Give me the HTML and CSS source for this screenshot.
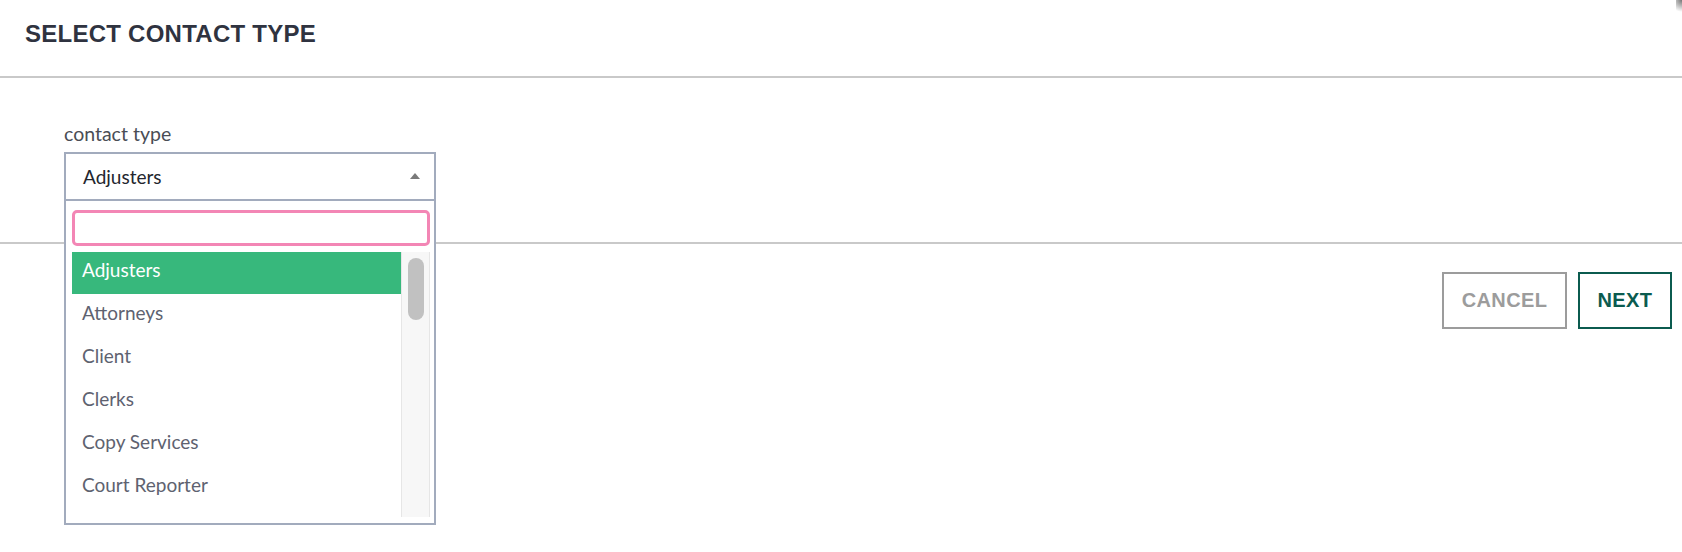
FILE: index.html
```html
<!DOCTYPE html>
<html lang="en">
<head>
  <meta charset="UTF-8">
  <title>Select contact type</title>
  <link rel="stylesheet" href="styles.css">
</head>
<body>
  <div class="modal">
    <div class="modal-header">
      <h2 class="modal-title">SELECT CONTACT TYPE</h2>
    </div>

    <div class="modal-body">
      <label class="field-label">contact type</label>
      <div class="select-wrap">
        <div class="select-box">
          <span class="select-value">Adjusters</span>
          <span class="select-arrow"></span>
        </div>

        <!-- open dropdown -->
        <div class="dropdown">
          <div class="search-row">
            <input type="text" class="search-input">
          </div>
          <div class="options">
            <ul class="option-list">
              <li class="option selected">Adjusters</li>
              <li class="option">Attorneys</li>
              <li class="option">Client</li>
              <li class="option">Clerks</li>
              <li class="option">Copy Services</li>
              <li class="option">Court Reporter</li>
            </ul>
            <div class="scroll-track">
              <div class="scroll-thumb"></div>
            </div>
          </div>
        </div>
      </div>
    </div>

    <div class="modal-footer">
      <button type="button" class="btn btn-cancel">CANCEL</button>
      <button type="button" class="btn btn-next">NEXT</button>
    </div>
  </div>
  <div class="corner-shadow"></div>
</body>
</html>
```

FILE: styles.css
```css
html, body {
  margin: 0;
  padding: 0;
  background: #fff;
  width: 100%;
  height: 100%;
  overflow: hidden;
}

.modal {
  font-family: "Lato", "Liberation Sans", sans-serif;
}

.modal-header {
  height: 78px;
  border-bottom: 2px solid #c9c9c9;
  display: flex;
  align-items: center;
  padding-left: 25px;
  box-sizing: border-box;
}

.modal-title {
  margin: 0;
  margin-top: -8px;
  font-family: "Liberation Sans", Arial, sans-serif;
  font-weight: bold;
  font-size: 24px;
  color: #2f3340;
  letter-spacing: 0.25px;
}

.modal-body {
  height: 166px;
  border-bottom: 2px solid #c9c9c9;
  padding: 46px 0 0 64px;
  box-sizing: border-box;
}

.field-label {
  display: block;
  font-size: 19.5px;
  color: #4a4d55;
  margin-bottom: 8px;
  line-height: 20px;
}

.select-wrap {
  position: relative;
  width: 372px;
}

.select-box {
  height: 49px;
  border: 2px solid #a2abbd;
  box-sizing: border-box;
  display: flex;
  align-items: center;
  justify-content: space-between;
  padding: 0 14px 0 17px;
}

.select-value {
  font-size: 19px;
  color: #23262e;
}

.select-arrow {
  width: 0;
  height: 0;
  margin-top: -2px;
  border-left: 5px solid transparent;
  border-right: 5px solid transparent;
  border-bottom: 6px solid #7a7a7a;
}

.dropdown {
  position: absolute;
  top: 49px;
  left: 0;
  width: 372px;
  height: 324px;
  background: #fff;
  border: 2px solid #a2abbd;
  border-top: none;
  box-sizing: border-box;
  padding: 9px 4px 0 6px;
  z-index: 10;
}

.search-row {
  display: flex;
}

.search-input {
  flex: 1;
  height: 36px;
  border: 3px solid #f386b5;
  border-radius: 5px;
  box-sizing: border-box;
  outline: none;
  margin: 0;
}

.options {
  display: flex;
  margin-top: 6px;
  height: 265px;
}

.option-list {
  list-style: none;
  margin: 0;
  padding: 0;
  flex: 1;
}

.option {
  height: 43px;
  line-height: 36px;
  padding: 0 0 7px 10px;
  box-sizing: border-box;
  font-size: 19px;
  color: #5e6270;
}

.option.selected {
  background: #37b87c;
  color: #fff;
  height: 42px;
  margin-bottom: 1px;
}

.scroll-track {
  width: 29px;
  background: #f7f7f7;
  border-left: 1px solid #e6e6e6;
  border-right: 1px solid #e6e6e6;
  padding-top: 6px;
  display: flex;
  justify-content: center;
  box-sizing: border-box;
}

.scroll-thumb {
  width: 16px;
  height: 62px;
  border-radius: 8px;
  background: #c1c1c1;
}

.modal-footer {
  display: flex;
  justify-content: flex-end;
  gap: 11px;
  padding: 28px 10px 0 0;
}

.btn {
  height: 57px;
  background: #fff;
  font-family: "Liberation Sans", Arial, sans-serif;
  font-weight: bold;
  font-size: 20px;
  letter-spacing: 0.4px;
  box-sizing: border-box;
  cursor: pointer;
}

.btn-cancel {
  width: 125px;
  border: 2px solid #9c9c9c;
  color: #9c9c9c;
}

.btn-next {
  width: 94px;
  border: 2px solid #0b5b4f;
  color: #0b5b4f;
}

.corner-shadow {
  position: absolute;
  top: 0;
  right: 0;
  width: 6px;
  height: 16px;
  background: radial-gradient(circle at 100% 0, rgba(60,60,60,0.7), rgba(255,255,255,0) 70%);
}
```
